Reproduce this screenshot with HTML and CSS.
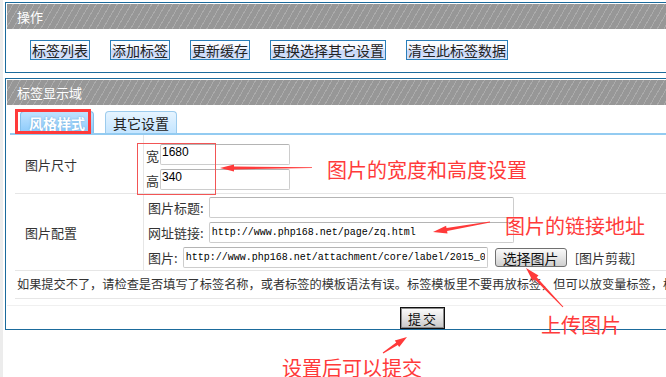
FILE: index.html
```html
<!DOCTYPE html>
<html lang="zh-CN">
<head>
  <meta charset="UTF-8">
  <meta name="viewport" content="width=device-width, initial-scale=1.0">
  <title>标签显示域</title>
  <link rel="stylesheet" href="styles.css">
</head>
<body>
  <div class="page">
    <div class="panel">
      <div class="panel-head">操作</div>
      <div class="toolbar">
        <button class="tool-btn">标签列表</button>
        <button class="tool-btn">添加标签</button>
        <button class="tool-btn">更新缓存</button>
        <button class="tool-btn">更换选择其它设置</button>
        <button class="tool-btn">清空此标签数据</button>
      </div>
    </div>

    <div class="panel panel-form">
      <div class="panel-head">标签显示域</div>
      <div class="tabs">
        <span class="tab tab-active">风格样式</span>
        <span class="tab">其它设置</span>
      </div>

      <div class="form-row row-size">
        <div class="form-label">图片尺寸</div>
        <div class="form-field">
          <div class="field-line"><span class="field-name tight">宽</span><input class="text-input size-input" value="1680"></div>
          <div class="field-line"><span class="field-name tight">高</span><input class="text-input size-input" value="340"></div>
        </div>
      </div>

      <div class="form-row row-image">
        <div class="form-label">图片配置</div>
        <div class="form-field">
          <div class="field-line"><span class="field-name">图片标题:</span><input class="text-input url-input" value=""></div>
          <div class="field-line"><span class="field-name">网址链接:</span><input class="text-input url-input" value="http://www.php168.net/page/zq.html"></div>
          <div class="field-line"><span class="field-name">图片:</span><input class="text-input url-input" value="http://www.php168.net/attachment/core/label/2015_0"><button class="pick-btn">选择图片</button><span class="crop-link">[图片剪裁]</span></div>
        </div>
      </div>

      <div class="notice">如果提交不了，请检查是否填写了标签名称，或者标签的模板语法有误。标签模板里不要再放标签，但可以放变量标签，标签模板里不要再放标签。</div>
      <div class="form-gap"></div>
      <div class="form-foot"><button class="submit-btn">提交</button></div>
    </div>

    <!-- annotations drawn over the screenshot -->
    <div class="mark-box mark-tab"></div>
    <div class="mark-box mark-size"></div>
    <svg class="arrows" width="666" height="377" viewBox="0 0 666 377">
      <polygon points="312,167.2 234,166.6 234,164.5 220,168 234,171.5 234,169.4 312,168"/>
      <polygon points="490.1,222.5 447.1,231.1 447.5,233.5 433,232 446.1,225.7 446.5,228.1 489.9,221.5"/>
      <polygon points="563.4,306.7 536.7,277.2 538.5,275.5 526,268 532.7,280.9 534.5,279.2 562.6,307.3"/>
      <polygon points="383.3,353.4 397.8,344.9 399.2,347 407,337 394.8,340.4 396.2,342.5 382.7,352.6"/>
    </svg>
    <div class="note note-size">图片的宽度和高度设置</div>
    <div class="note note-link">图片的链接地址</div>
    <div class="note note-upload">上传图片</div>
    <div class="note note-submit">设置后可以提交</div>
  </div>
</body>
</html>
```

FILE: styles.css
```css
:root {
  --panel-border: #1b6b9c;
  --head-bg: #999;
  --line-color: #e6e6e6;
  --text-color: #333;
  --mark-red: #ff3a3a;
}

html, body {
  overflow: hidden;
}

body {
  margin: 0;
  font-family: "Noto Sans CJK SC", "Noto Sans", sans-serif;
  color: var(--text-color);
  background: linear-gradient(to right, #ececec 0 3px, #fff 3px);
}

.page {
  position: relative;
  width: 666px;
  height: 377px;
  padding: 2px 0 0 5px;
  box-sizing: border-box;
}

.panel {
  width: 830px;
  border: 1px solid var(--panel-border);
  padding: 1px 0 0 1px;
  margin-bottom: 5px;
  background: #fff;
}

.panel-head {
  height: 25px;
  line-height: 25px;
  padding-left: 10px;
  font-size: 13px;
  color: #fff;
  background-color: var(--head-bg);
  background-image: repeating-linear-gradient(120deg, #979797 0 5px, #ababab 5px 6px);
}

.toolbar {
  display: flex;
  gap: 20px;
  padding: 11px 0 12px 23px;
}

.tool-btn {
  height: 20px;
  padding: 0 1px;
  border: 1px solid #2a7fba;
  font-family: inherit;
  font-size: 14px;
  line-height: 18px;
  color: #222;
  background: linear-gradient(#fff 0, #f1f5fd 45%, #c6d6f8 55%, #d8e3fb 100%);
}

.tabs {
  display: flex;
  gap: 11px;
  margin-left: 3px;
  padding: 6px 0 0 10px;
  border-bottom: 2px solid #93cbf1;
}

.tab {
  height: 22px;
  line-height: 22px;
  padding: 0 7px;
  box-sizing: border-box;
  font-size: 14px;
  color: #222;
  border: 1px solid #9ccbed;
  border-bottom: 0;
  border-radius: 4px 4px 0 0;
  background: linear-gradient(#e6f4ff, #c4e5ff);
}

.tab-active {
  padding: 0 8px;
  font-weight: bold;
  color: #fff;
  text-shadow: 0 0 2px #6aa8d8;
  border-color: #84bfea;
  background: linear-gradient(#bfe3ff, #8ccafa);
}

.form-row {
  display: flex;
  margin-left: 8px;
  border-bottom: 1px solid var(--line-color);
}

.form-label {
  width: 129px;
  box-sizing: border-box;
  padding-left: 10px;
  border-right: 1px solid var(--line-color);
  display: flex;
  align-items: center;
  font-size: 13px;
}

.form-field {
  display: flex;
  flex-direction: column;
  gap: 4px;
  padding-left: 1px;
}

.row-size .form-field {
  padding-top: 9px;
  padding-bottom: 3px;
}

.row-image .form-field {
  padding-top: 3px;
  padding-bottom: 2px;
}

.field-line {
  display: flex;
  align-items: center;
  height: 21px;
}

.field-name {
  margin-left: 3px;
  margin-right: 4px;
  font-size: 13px;
  white-space: nowrap;
}

.field-name.tight {
  margin-left: 1px;
  margin-right: 1px;
  align-self: flex-end;
  line-height: 18px;
}

.text-input {
  height: 21px;
  box-sizing: border-box;
  margin: 0;
  border: 1px solid #cdcdcd;
  border-top-color: #b4b4b4;
  border-radius: 2px;
  color: #000;
  background: #fff;
}

.size-input {
  width: 130px;
  padding: 0 1px 5px;
  font-family: "Liberation Sans", sans-serif;
  font-size: 12px;
}

.url-input {
  width: 305px;
  padding: 0 2px;
  font-family: "Liberation Mono", monospace;
  font-size: 10px;
}

.field-name + .url-input {
  margin-left: 1px;
}

.pick-btn {
  height: 19px;
  margin-left: 7px;
  padding: 0 7px;
  border: 1px solid #707070;
  border-radius: 3px;
  font-family: inherit;
  font-size: 14px;
  line-height: 16px;
  color: #111;
  background: linear-gradient(#fafafa, #e6e6e6 50%, #cfcfcf);
}

.crop-link {
  margin-left: 8px;
  font-size: 13px;
}

.notice {
  height: 27px;
  line-height: 27px;
  margin-left: 8px;
  padding-left: 2px;
  font-size: 12.2px;
  white-space: nowrap;
  overflow: hidden;
  border-bottom: 1px solid var(--line-color);
}

.form-gap {
  height: 6px;
  border-bottom: 1px solid #f0f0f0;
}

.form-foot {
  display: flex;
  justify-content: center;
  padding: 1px 0 0;
  height: 23px;
  box-sizing: border-box;
}

.submit-btn {
  width: 45px;
  height: 22px;
  padding: 0;
  border: 1px solid #111;
  box-shadow: inset 0 0 0 1px #8a8a8a;
  font-family: inherit;
  font-size: 13px;
  letter-spacing: 2px;
  text-indent: 2px;
  color: #111;
  background: linear-gradient(#fdfdfd, #e2e2e2 55%, #c6c6c6);
}

/* red annotation layer */
.mark-box {
  position: absolute;
  box-sizing: border-box;
}

.mark-tab {
  left: 15px;
  top: 109px;
  width: 76px;
  height: 25px;
  border: 3px solid var(--mark-red);
}

.mark-size {
  left: 137px;
  top: 143px;
  width: 79px;
  height: 52px;
  border: 1px solid #f25555;
}

.arrows {
  position: absolute;
  left: 0;
  top: 0;
  pointer-events: none;
  fill: var(--mark-red);
}

.note {
  position: absolute;
  font-size: 20px;
  line-height: 20px;
  color: var(--mark-red);
  white-space: nowrap;
}

.note-size {
  left: 327px;
  top: 160px;
}

.note-link {
  left: 505px;
  top: 216px;
}

.note-upload {
  left: 541px;
  top: 315px;
}

.note-submit {
  left: 282px;
  top: 358px;
}
```
